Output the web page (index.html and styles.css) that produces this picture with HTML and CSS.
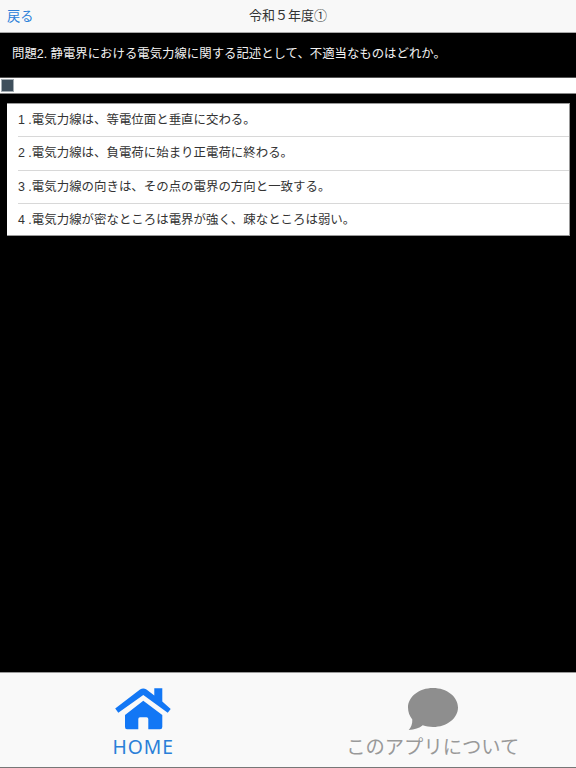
FILE: index.html
```html
<!DOCTYPE html>
<html lang="ja">
<head>
<meta charset="utf-8">
<title>令和5年度①</title>
<link rel="stylesheet" href="styles.css">
</head>
<body>
<div class="app">
  <header class="navbar">
    <a class="back">戻る</a>
    <h1 class="title">令和５年度①</h1>
  </header>
  <main class="content">
    <p class="question">問題2. 静電界における電気力線に関する記述として、不適当なものはどれか。</p>
    <div class="progress"><div class="progress-fill"></div></div>
    <ul class="choices">
      <li class="choice">1 .電気力線は、等電位面と垂直に交わる。</li>
      <li class="choice">2 .電気力線は、負電荷に始まり正電荷に終わる。</li>
      <li class="choice">3 .電気力線の向きは、その点の電界の方向と一致する。</li>
      <li class="choice">4 .電気力線が密なところは電界が強く、疎なところは弱い。</li>
    </ul>
  </main>
  <nav class="tabbar">
    <div class="tab tab-active">
      <svg class="icon" width="56" height="42" viewBox="0 0 56 42">
        <path fill="#1277f5" d="M.2 20.5 25 1.500Q28.300-.5 31.500 1.500L39.300 7.500V.3H47.300V13.500L55.700 21 52.700 24.700 28.300 7 3.300 24.700Z"/>
        <path fill="#1277f5" d="M28.300 12.700 47.300 27V39Q47.300 41.300 45 41.300H33.300V31Q33.300 29.300 31.500 29.300H25Q23.300 29.300 23.300 31V41.300H12Q10 41.300 10 39V27Z"/>
      </svg>
      <span class="tab-label tab-label-home">HOME</span>
    </div>
    <div class="tab">
      <svg class="icon" width="50" height="42" viewBox="0 0 50 42">
        <path fill="#8e8e8e" d="M25 0C38.800 0 50 8.700 50 19.500S38.800 39 25 39C21.500 39 18 38.400 14.700 37.300 11.500 40 6.500 42 .7 42 3 39.700 4.500 36 4.300 31.500 1.600 28 0 24 0 19.500 0 8.700 11.200 0 25 0Z"/>
      </svg>
      <span class="tab-label">このアプリについて</span>
    </div>
  </nav>
</div>
</body>
</html>
```
FILE: styles.css
```css
* { box-sizing: border-box; }
html, body { margin: 0; padding: 0; }
body {
  width: 576px;
  height: 768px;
  overflow: hidden;
  background: #000;
  font-family: "Liberation Sans", "Noto Sans CJK JP", sans-serif;
}
.app {
  display: flex;
  flex-direction: column;
  height: 768px;
}
.navbar {
  position: relative;
  flex: none;
  height: 33px;
  display: flex;
  align-items: center;
  justify-content: center;
  background: #f8f8f8;
  border-bottom: 1px solid #a8a8a8;
}
.back {
  position: absolute;
  left: 7px;
  top: 8px;
  font-size: 13.200px;
  line-height: 18px;
  color: #2a7fd8;
}
.title {
  margin: 0;
  font-size: 13px;
  font-weight: 400;
  line-height: 18px;
  color: #333;
}
.content {
  flex: 1;
  min-height: 0;
}
.question {
  margin: 0;
  height: 44px;
  padding: 12px 12px 0;
  font-size: 12.400px;
  line-height: 18px;
  color: #f2f2f2;
  background: #000;
}
.progress {
  height: 17px;
  margin-bottom: 9px;
  padding: 1px;
  background: #fff;
  border-top: 1px solid #555;
  border-bottom: 1px solid #888;
}
.progress-fill {
  width: 13px;
  height: 100%;
  background: #3f4f5c;
  border: 1px solid #a4adb3;
}
.choices {
  list-style: none;
  margin: 0 6px 0 7px;
  padding: 0;
  background: #fff;
  border-top: 1px solid #999;
  border-right: 1px solid #999;
}
.choice {
  height: 33.400px;
  margin-left: 11px;
  padding-top: 7px;
  font-size: 12.450px;
  line-height: 18px;
  color: #333;
  border-bottom: 1px solid #d8d8d8;
}
.choice:last-child {
  height: 32px;
  margin-left: 0;
  padding-left: 11px;
  border-bottom-color: #999;
}
.tabbar {
  flex: none;
  height: 96px;
  display: flex;
  gap: 3px;
  background: #f9f9f9;
  border-top: 1px solid #999;
  border-bottom: 1px solid #777;
}
.tab {
  flex: 1;
  display: flex;
  flex-direction: column;
  align-items: center;
  padding-top: 15px;
  color: #999;
}
.tab-active { color: #2a7fd8; }
.icon { display: block; flex: none; }
.tab-label {
  margin-top: 6px;
  font-size: 19.300px;
  line-height: 22px;
  font-family: "Noto Sans", "Noto Sans CJK JP", sans-serif;
}
.tab-label-home { letter-spacing: 1px; }
```
